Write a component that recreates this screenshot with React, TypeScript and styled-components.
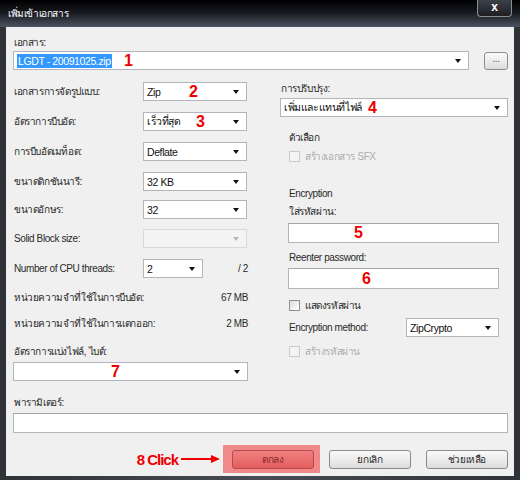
import styled, { createGlobalStyle } from "styled-components";

const GlobalStyle = createGlobalStyle`
  html, body {
    margin: 0;
    padding: 0;
    background: #ffffff;
  }
  body {
    font-family: "Liberation Sans", "DejaVu Sans", "Noto Sans", sans-serif;
    font-size: 10px;
    letter-spacing: -0.4px;
    color: #2a2a2a;
  }
`;

const Window = styled.div`
  width: 520px;
  height: 480px;
  display: flex;
  flex-direction: column;
  background: #3b3e44;
`;

const TitleBar = styled.div`
  height: 27px;
  flex-shrink: 0;
  display: flex;
  justify-content: space-between;
  align-items: flex-start;
  background: linear-gradient(#000000 0%, #15181d 45%, #4a5361 100%);
  color: #ffffff;
`;

const Title = styled.div`
  font-size: 10px;
  line-height: 27px;
  padding-left: 8px;
`;

const CloseButton = styled.div`
  width: 35px;
  height: 17px;
  margin-right: 8px;
  box-sizing: border-box;
  border: 1px solid #8a8d93;
  border-top: none;
  border-radius: 0 0 4px 4px;
  background: linear-gradient(#3d4148, #1c1e22);
  color: #ffffff;
  font-weight: bold;
  font-size: 12px;
  line-height: 14px;
  text-align: center;
`;

const Frame = styled.div`
  flex: 1;
  display: flex;
  padding: 0 7px 4px 6px;
  background: linear-gradient(90deg, #2f3237, #484c53 50%, #2f3237);
`;

const Client = styled.div`
  flex: 1;
  display: flex;
  flex-direction: column;
  padding: 9px 6px 0 7px;
  background: #f0f0f0;
`;

const Label = styled.div<{ mt?: number }>`
  height: 13px;
  line-height: 13px;
  margin-top: ${({ mt }) => mt ?? 0}px;
  padding-left: 1px;
  white-space: nowrap;
`;

const Combo = styled.div<{ w?: number; mt?: number; grow?: boolean; disabled?: boolean }>`
  position: relative;
  display: flex;
  align-items: center;
  box-sizing: border-box;
  height: 19px;
  flex: ${({ grow }) => (grow ? "1 1 auto" : "none")};
  width: ${({ w }) => (w ? `${w}px` : "auto")};
  margin-top: ${({ mt }) => mt ?? 0}px;
  padding: 0 18px 0 3px;
  border: 1px solid ${({ disabled }) => (disabled ? "#d9d9d9" : "#b3b5bb")};
  background: ${({ disabled }) => (disabled ? "#f4f4f4" : "#ffffff")};
  color: #111111;
  font-size: 10.5px;

  &::after {
    content: "";
    position: absolute;
    right: 7px;
    top: 50%;
    margin-top: -2px;
    border-left: 3px solid transparent;
    border-right: 3px solid transparent;
    border-top: 4px solid ${({ disabled }) => (disabled ? "#b8b8b8" : "#111111")};
  }
`;

const Field = styled.div<{ h: number; mt?: number }>`
  position: relative;
  box-sizing: border-box;
  height: ${({ h }) => h}px;
  margin-top: ${({ mt }) => mt ?? 0}px;
  border: 1px solid #b3b5bb;
  border-top-color: #a2a5ab;
  background: #ffffff;
`;

const Selected = styled.span`
  background: #3399ff;
  color: #ffffff;
  line-height: 14px;
  padding: 0 1px;
`;

// red numbered callouts laid over the controls
const Mark = styled.span<{ x: number }>`
  position: absolute;
  left: ${({ x }) => x}px;
  top: 50%;
  transform: translateY(-52%);
  font-family: "Liberation Sans Narrow", "Liberation Sans", sans-serif;
  font-weight: bold;
  font-size: 16px;
  line-height: 16px;
  letter-spacing: 0;
  color: #ee0000;
`;

const TopRow = styled.div`
  display: flex;
  align-items: center;
  margin-top: 2px;
`;

const BrowseButton = styled.div`
  width: 24px;
  height: 18px;
  margin-left: 15px;
  box-sizing: border-box;
  border: 1px solid #8c8c8c;
  border-radius: 3px;
  background: linear-gradient(#fbfbfb, #dcdcdc);
  color: #555555;
  text-align: center;
  line-height: 12px;
  font-size: 10px;
`;

const Columns = styled.div`
  display: flex;
  align-items: flex-start;
  gap: 32px;
  margin-top: 12px;
`;

const LeftCol = styled.div`
  width: 235px;
  display: flex;
  flex-direction: column;
`;

const RightCol = styled.div`
  width: 228px;
  display: flex;
  flex-direction: column;
`;

const Row = styled.div<{ mt?: number }>`
  display: flex;
  align-items: center;
  height: 19px;
  margin-top: ${({ mt }) => mt ?? 0}px;
`;

const RowLabel = styled.div<{ w: number }>`
  width: ${({ w }) => w}px;
  flex-shrink: 0;
  padding-left: 1px;
  box-sizing: border-box;
  white-space: nowrap;
`;

const Spacer = styled.div`
  flex: 1;
  text-align: right;
`;

const InfoRow = styled.div<{ mt: number }>`
  display: flex;
  justify-content: space-between;
  height: 14px;
  line-height: 14px;
  margin-top: ${({ mt }) => mt}px;
  padding-left: 1px;
  white-space: nowrap;
`;

const Group = styled.div`
  display: flex;
  flex-direction: column;
  padding: 0 9px 0 8px;
`;

const CheckRow = styled.div<{ mt: number; disabled?: boolean }>`
  display: flex;
  align-items: center;
  height: 13px;
  margin-top: ${({ mt }) => mt}px;
  padding-left: 1px;
  color: ${({ disabled }) => (disabled ? "#adadad" : "#2a2a2a")};
`;

const Box = styled.span<{ disabled?: boolean }>`
  width: 11px;
  height: 11px;
  box-sizing: border-box;
  margin-right: 5px;
  border: 1px solid ${({ disabled }) => (disabled ? "#cacaca" : "#8f8f8f")};
  background: ${({ disabled }) =>
    disabled ? "#f4f4f4" : "linear-gradient(135deg, #dcdcdc, #ffffff)"};
`;

const Buttons = styled.div`
  display: flex;
  align-items: center;
  justify-content: flex-end;
  margin-top: 12px;
`;

const Note = styled.div`
  display: flex;
  align-items: center;
  margin-right: 2px;
  font-family: "Liberation Sans Narrow", "Liberation Sans", sans-serif;
  font-weight: bold;
  font-size: 15px;
  letter-spacing: -1px;
  color: #ee0000;
`;

const Highlight = styled.div`
  padding: 5px 6px 4px 9px;
  margin-right: 9px;
  background: #f08a8a;
`;

const Button = styled.div<{ primary?: boolean }>`
  width: 82px;
  height: 19px;
  box-sizing: border-box;
  border: 1px solid ${({ primary }) => (primary ? "#b84a4a" : "#8a8a8a")};
  border-radius: 3px;
  background: ${({ primary }) =>
    primary ? "linear-gradient(#f08080, #e45e5e)" : "linear-gradient(#fafafa, #dddddd)"};
  color: ${({ primary }) => (primary ? "#8a2a2a" : "#2a2a2a")};
  text-align: center;
  line-height: 17px;
  & + & {
    margin-left: 15px;
  }
`;

const Arrow = () => (
  <svg width="40" height="10" viewBox="0 0 40 10" style={{ marginLeft: 3 }}>
    <line x1="0" y1="5" x2="32" y2="5" stroke="#ee0000" strokeWidth="2" />
    <path d="M30 1 L39 5 L30 9 Z" fill="#ee0000" />
  </svg>
);

export default function App() {
  return (
    <>
      <GlobalStyle />
      <Window>
        <TitleBar>
          <Title>เพิ่มเข้าเอกสาร</Title>
          <CloseButton>x</CloseButton>
        </TitleBar>
        <Frame>
          <Client>
            <Label>เอกสาร:</Label>
            <TopRow>
              <Combo grow>
                <Selected>LGDT - 20091025.zip</Selected>
                <Mark x={110}>1</Mark>
              </Combo>
              <BrowseButton>...</BrowseButton>
            </TopRow>

            <Columns>
              <LeftCol>
                <Row>
                  <RowLabel w={130}>เอกสารการจัดรูปแบบ:</RowLabel>
                  <Combo w={104}>
                    Zip<Mark x={45}>2</Mark>
                  </Combo>
                </Row>
                <Row mt={11}>
                  <RowLabel w={130}>อัตราการบีบอัด:</RowLabel>
                  <Combo w={104}>
                    เร็วที่สุด<Mark x={52}>3</Mark>
                  </Combo>
                </Row>
                <Row mt={11}>
                  <RowLabel w={130}>การบีบอัดเมท็อด:</RowLabel>
                  <Combo w={104}>Deflate</Combo>
                </Row>
                <Row mt={11}>
                  <RowLabel w={130}>ขนาดดิกชันนารี:</RowLabel>
                  <Combo w={104}>32 KB</Combo>
                </Row>
                <Row mt={9}>
                  <RowLabel w={130}>ขนาดอักษร:</RowLabel>
                  <Combo w={104}>32</Combo>
                </Row>
                <Row mt={10}>
                  <RowLabel w={130}>Solid Block size:</RowLabel>
                  <Combo w={104} disabled />
                </Row>
                <Row mt={11}>
                  <RowLabel w={130}>Number of CPU threads:</RowLabel>
                  <Combo w={60}>2</Combo>
                  <Spacer>/ 2</Spacer>
                </Row>
                <InfoRow mt={13}>
                  <span>หน่วยความจำที่ใช้ในการบีบอัด:</span>
                  <span>67 MB</span>
                </InfoRow>
                <InfoRow mt={12}>
                  <span>หน่วยความจำที่ใช้ในการแตกออก:</span>
                  <span>2 MB</span>
                </InfoRow>
                <Label mt={14}>อัตราการแบ่งไฟล์, ไบต์:</Label>
                <Combo mt={4}>
                  <Mark x={97}>7</Mark>
                </Combo>
              </LeftCol>

              <RightCol>
                <Label>การปรับปรุง:</Label>
                <Combo mt={3}>
                  เพิ่มและแทนที่ไฟล์<Mark x={87}>4</Mark>
                </Combo>
                <Group>
                  <Label mt={14}>ตัวเลือก</Label>
                  <CheckRow mt={6} disabled>
                    <Box disabled />
                    สร้างเอกสาร SFX
                  </CheckRow>
                  <Label mt={24}>Encryption</Label>
                  <Label mt={5}>ใส่รหัสผ่าน:</Label>
                  <Field h={20} mt={5}>
                    <Mark x={65}>5</Mark>
                  </Field>
                  <Label mt={8}>Reenter password:</Label>
                  <Field h={21} mt={4}>
                    <Mark x={73}>6</Mark>
                  </Field>
                  <CheckRow mt={10}>
                    <Box />
                    แสดงรหัสผ่าน
                  </CheckRow>
                  <Row mt={6}>
                    <RowLabel w={118}>Encryption method:</RowLabel>
                    <Combo grow>ZipCrypto</Combo>
                  </Row>
                  <CheckRow mt={8} disabled>
                    <Box disabled />
                    สร้างรหัสผ่าน
                  </CheckRow>
                </Group>
              </RightCol>
            </Columns>

            <Label mt={15}>พารามิเตอร์:</Label>
            <Field h={20} mt={4} />

            <Buttons>
              <Note>
                8 Click
                <Arrow />
              </Note>
              <Highlight>
                <Button primary>ตกลง</Button>
              </Highlight>
              <Button>ยกเลิก</Button>
              <Button>ช่วยเหลือ</Button>
            </Buttons>
          </Client>
        </Frame>
      </Window>
    </>
  );
}
